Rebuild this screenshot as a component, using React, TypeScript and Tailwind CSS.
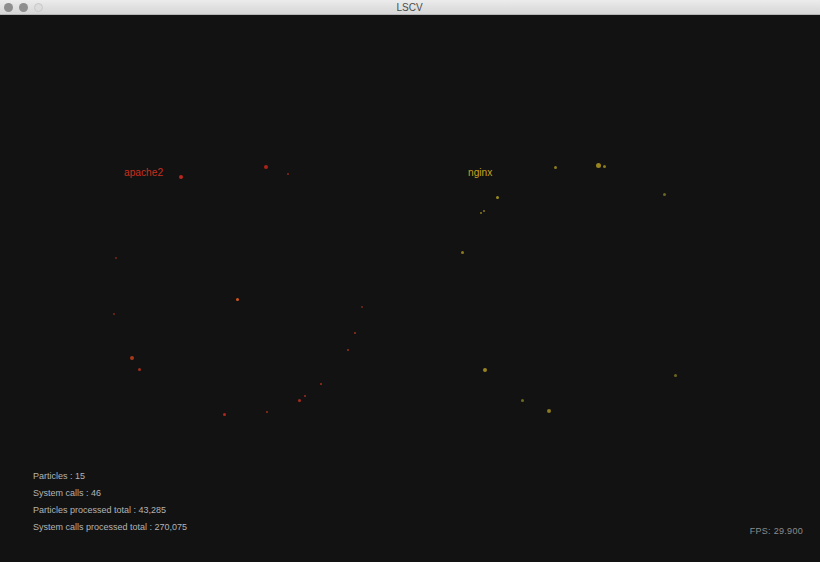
const red = [
  { x: 181, y: 177, s: 4, c: '#b8281c' },
  { x: 266, y: 167, s: 4, c: '#a82418' },
  { x: 288, y: 174, s: 2, c: '#8a2a18' },
  { x: 116, y: 258, s: 2, c: '#7a2818' },
  { x: 237, y: 299, s: 3, c: '#d4561c' },
  { x: 114, y: 314, s: 2, c: '#7a2818' },
  { x: 362, y: 307, s: 2, c: '#7a2818' },
  { x: 355, y: 333, s: 2, c: '#a0301c' },
  { x: 348, y: 350, s: 2, c: '#a0301c' },
  { x: 132, y: 358, s: 4, c: '#a8381c' },
  { x: 139, y: 369, s: 3, c: '#a0301c' },
  { x: 321, y: 384, s: 2, c: '#a0301c' },
  { x: 305, y: 396, s: 2, c: '#9a3020' },
  { x: 299, y: 400, s: 3, c: '#a82c1c' },
  { x: 224, y: 414, s: 3, c: '#b0281c' },
  { x: 267, y: 412, s: 2, c: '#a02c1c' },
];

const yellow = [
  { x: 555, y: 167, s: 3, c: '#8a7a20' },
  { x: 598, y: 165, s: 5, c: '#9a8420' },
  { x: 604, y: 166, s: 3, c: '#8a7a20' },
  { x: 664, y: 194, s: 3, c: '#6e6420' },
  { x: 497, y: 197, s: 3, c: '#9a8a20' },
  { x: 484, y: 211, s: 2, c: '#8a7a20' },
  { x: 481, y: 213, s: 2, c: '#8a7a20' },
  { x: 462, y: 252, s: 3, c: '#8a7a20' },
  { x: 485, y: 370, s: 4, c: '#9a8420' },
  { x: 675, y: 375, s: 3, c: '#6e6420' },
  { x: 522, y: 400, s: 3, c: '#6e6a20' },
  { x: 549, y: 411, s: 4, c: '#8a7a20' },
];

const stats = [
  'Particles : 15',
  'System calls : 46',
  'Particles processed total : 43,285',
  'System calls processed total : 270,075',
];

export default function App() {
  return (
    <div className="w-[820px] h-[562px] flex flex-col bg-[#121212] overflow-hidden font-['Liberation_Sans',_'DejaVu_Sans',_sans-serif]">
      <div className="h-[15px] shrink-0 flex items-center bg-gradient-to-b from-[#ececec] to-[#d6d6d6] border-b border-[#b5b5b5] px-[4px] relative">
        <div className="flex gap-[6px]">
          <span className="w-[9px] h-[9px] rounded-full bg-[#8e8e8e]" />
          <span className="w-[9px] h-[9px] rounded-full bg-[#8e8e8e]" />
          <span className="w-[9px] h-[9px] rounded-full bg-[#dcdcdc] border border-[#c8c8c8]" />
        </div>
        <div className="flex-1 text-center text-[10px] text-[#4a4a4a] pr-[40px]">LSCV</div>
      </div>

      <div className="flex-1 relative flex items-end justify-between pl-[33px] pr-[17px] pb-[29px]">
        {red.concat(yellow).map((p, i) => (
          <span
            key={i}
            className="absolute rounded-full"
            style={{ left: p.x - p.s / 2, top: p.y - 15 - p.s / 2, width: p.s, height: p.s, background: p.c }}
          />
        ))}
        <span className="absolute left-[124px] top-[150px] text-[10.2px] text-[#c8301e]">apache2</span>
        <span className="absolute left-[468px] top-[150px] text-[10.2px] text-[#c8a020]">nginx</span>

        <div className="flex flex-col gap-[5px] text-[9px] leading-[12px] text-[#b4b4b4]">
          {stats.map((s) => (
            <span key={s}>{s}</span>
          ))}
        </div>
        <span className="text-[9px] leading-[12px] text-[#8c8c8c] tracking-[0.3px] mb-[-4px]">FPS: 29.900</span>
      </div>
    </div>
  );
}
